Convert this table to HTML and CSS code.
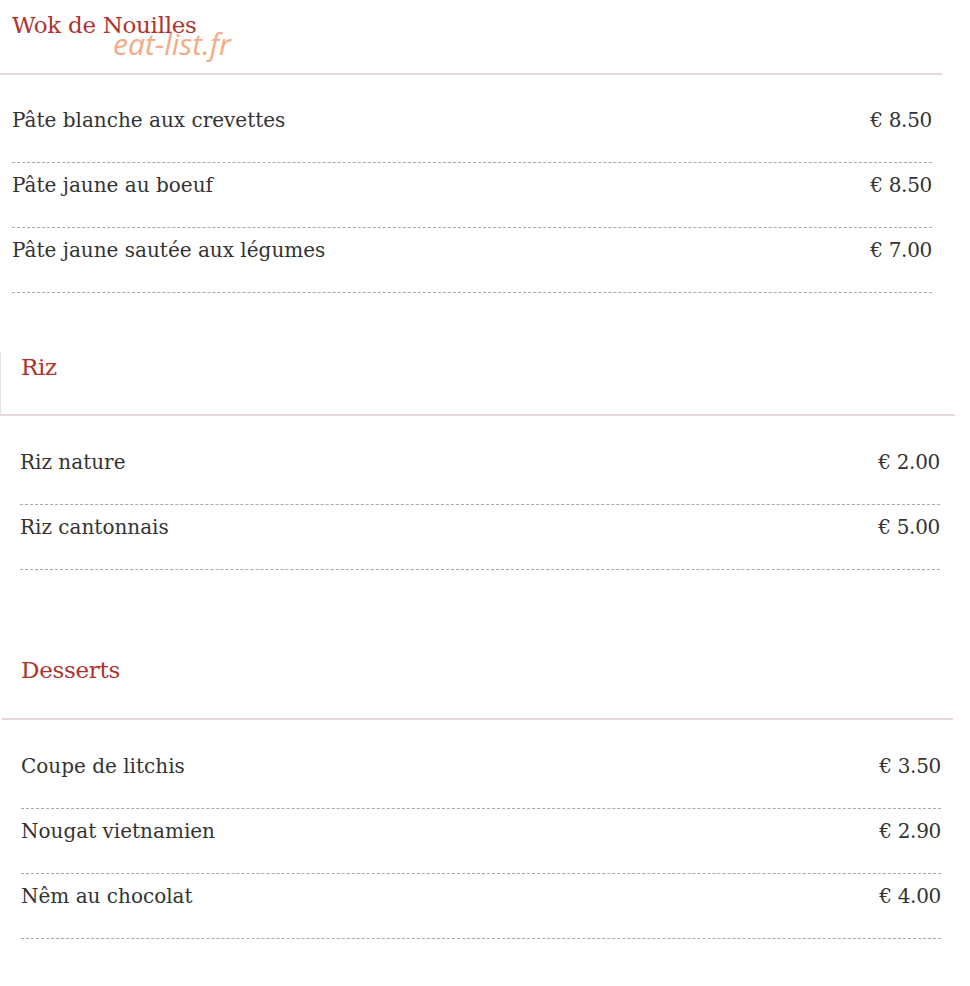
FILE: index.html
```html
<!DOCTYPE html>
<html lang="fr">
<head>
    <meta charset="utf-8">
    <title>Wok de Nouilles - Carte</title>
    <link rel="stylesheet" href="styles.css">
</head>
<body>

    <section class="menu menu-wok">
        <div class="menu-head">
            <h2 class="menu-title">Wok de Nouilles</h2>
            <span class="watermark">eat-list.fr</span>
        </div>
        <ul class="items">
            <li><span class="name">Pâte blanche aux crevettes</span><span class="price">€ 8.50</span></li>
            <li><span class="name">Pâte jaune au boeuf</span><span class="price">€ 8.50</span></li>
            <li><span class="name">Pâte jaune sautée aux légumes</span><span class="price">€ 7.00</span></li>
        </ul>
    </section>

    <section class="menu menu-riz">
        <div class="menu-head">
            <h2 class="menu-title">Riz</h2>
        </div>
        <ul class="items">
            <li><span class="name">Riz nature</span><span class="price">€ 2.00</span></li>
            <li><span class="name">Riz cantonnais</span><span class="price">€ 5.00</span></li>
        </ul>
    </section>

    <section class="menu menu-desserts">
        <div class="menu-head">
            <h2 class="menu-title">Desserts</h2>
        </div>
        <ul class="items">
            <li><span class="name">Coupe de litchis</span><span class="price">€ 3.50</span></li>
            <li><span class="name">Nougat vietnamien</span><span class="price">€ 2.90</span></li>
            <li><span class="name">Nêm au chocolat</span><span class="price">€ 4.00</span></li>
        </ul>
    </section>

</body>
</html>
```

FILE: styles.css
```css
* {
    box-sizing: border-box;
}

body {
    margin: 0;
    background: #fff;
    color: #333;
    font-family: "DejaVu Serif", "Liberation Serif", serif;
}

/* section header with pink rule */
.menu-head {
    position: relative;
    border-bottom: 2px solid #e8d6d9;
}

.menu-title {
    margin: 0;
    font-size: 23px;
    font-weight: normal;
    line-height: 30px;
    color: #b0322d;
    letter-spacing: -0.3px;
}

.watermark {
    position: absolute;
    left: 113px;
    top: 26px;
    font-family: "Open Sans", sans-serif;
    font-style: italic;
    font-size: 30px;
    line-height: 36px;
    color: #f2ab87;
}

.items {
    list-style: none;
    margin: 0;
    padding: 0;
    width: 920px;
}

.items li {
    display: flex;
    justify-content: space-between;
    padding: 10px 0 29px;
    line-height: 25px;
    font-size: 20px;
    border-bottom: 1px dashed #a9a9a9;
}

.price {
    letter-spacing: -0.3px;
}

/* first block */
.menu-wok .menu-head {
    width: 942px;
    height: 75px;
    padding: 10px 0 0 12px;
}

.menu-wok .items {
    margin: 23px 0 0 12px;
}

/* rice block */
.menu-riz {
    margin-top: 59px;
}

.menu-riz .menu-head {
    width: 955px;
    height: 64px;
    padding: 0 0 0 20px;
    border-left: 1px solid #e4dfe0;
}

.menu-riz .items {
    margin: 24px 0 0 20px;
}

/* desserts block */
.menu-desserts {
    margin-top: 85px;
}

.menu-desserts .menu-head {
    width: 951px;
    height: 65px;
    margin-left: 2px;
    padding: 0 0 0 19px;
}

.menu-desserts .items {
    margin: 24px 0 0 21px;
}
```
